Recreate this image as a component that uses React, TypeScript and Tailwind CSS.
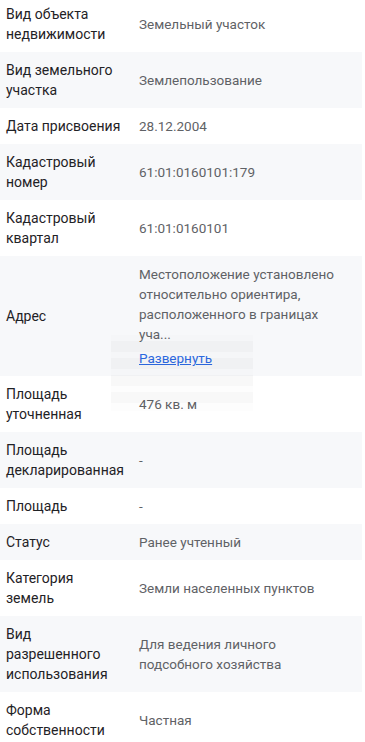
const rows: { label: string; value: string; link?: boolean }[] = [
  { label: "Вид объекта недвижимости", value: "Земельный участок" },
  { label: "Вид земельного участка", value: "Землепользование" },
  { label: "Дата присвоения", value: "28.12.2004" },
  { label: "Кадастровый номер", value: "61:01:0160101:179" },
  { label: "Кадастровый квартал", value: "61:01:0160101" },
  {
    label: "Адрес",
    value:
      "Местоположение установлено относительно ориентира, расположенного в границах уча...",
    link: true,
  },
  { label: "Площадь уточненная", value: "476 кв. м" },
  { label: "Площадь декларированная", value: "-" },
  { label: "Площадь", value: "-" },
  { label: "Статус", value: "Ранее учтенный" },
  { label: "Категория земель", value: "Земли населенных пунктов" },
  { label: "Вид разрешенного использования", value: "Для ведения личного подсобного хозяйства" },
  { label: "Форма собственности", value: "Частная" },
];

export default function App() {
  return (
    <div className="relative w-[365px] h-[742px] overflow-hidden bg-white font-['Roboto',sans-serif] text-[14px] leading-[20px]">
      <div className="-mt-[4px] w-[362px]">
        {rows.map((r, i) => (
          <div
            key={r.label}
            className={`flex items-center px-[6px] py-[8px] ${i % 2 === 1 ? "bg-[#f7f8fa]" : "bg-white"}`}
          >
            <div className="w-[115px] shrink-0 text-[#1f2226]">{r.label}</div>
            <div className="ml-[18px] w-[204px] text-[13.5px] text-[#5f6266]">
              {r.value}
              {r.link && (
                <div className="mt-[4px]">
                  <a href="#" className="text-[#2d6ae3] underline">
                    Развернуть
                  </a>
                </div>
              )}
            </div>
          </div>
        ))}
      </div>

      {/* faded tooltip ghost */}
      <div className="absolute left-[111px] top-[335px] w-[142px] h-[76px] flex flex-col gap-[6px] pt-[6px] bg-black/[0.008]">
        <div className="h-[11px] bg-black/[0.02]" />
        <div className="h-[11px] bg-black/[0.02]" />
        <div className="h-[11px] bg-black/[0.02]" />
        <div className="h-[11px] bg-black/[0.02]" />
      </div>
    </div>
  );
}
